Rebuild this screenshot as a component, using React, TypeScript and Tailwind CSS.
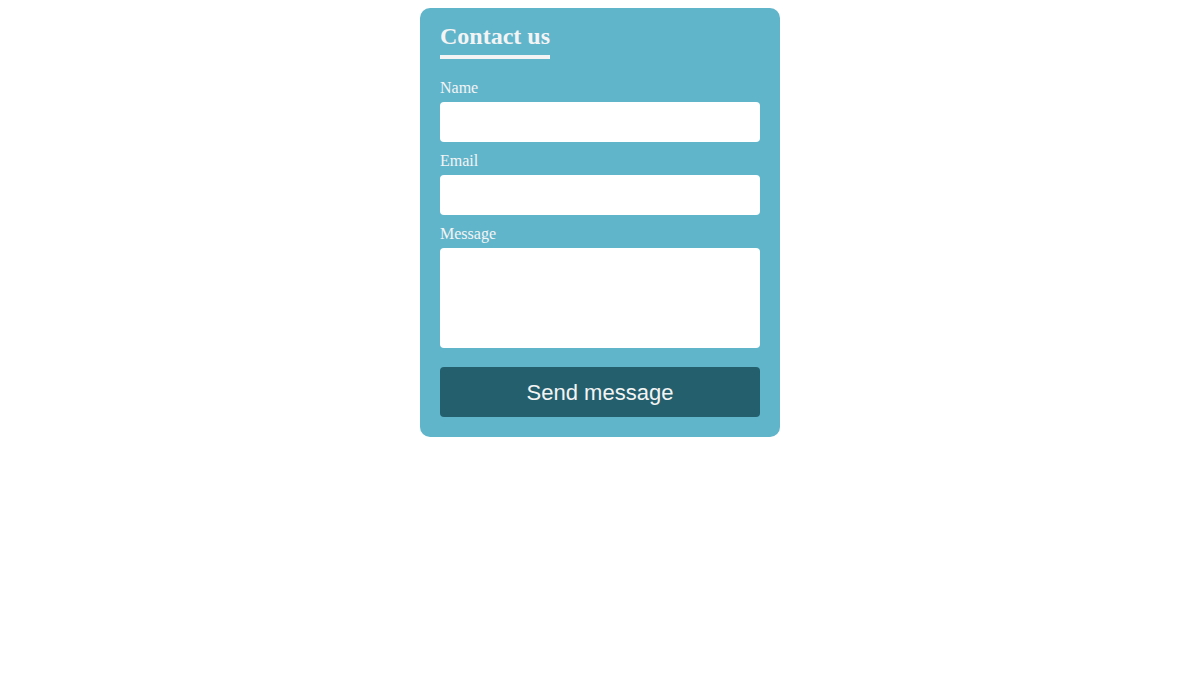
export default function App() {
  return (
    <div className="min-h-[682px] w-full bg-white pt-[8px]" style={{ fontFamily: '"Liberation Serif", "Times New Roman", serif' }}>
      <form
        className="mx-auto flex w-[360px] flex-col rounded-[10px] bg-[#61b5cb] px-[20px] pt-[14px] pb-[20px] text-[#f4f4f4]"
        onSubmit={(e) => e.preventDefault()}
      >
        <div className="mb-[10px] flex">
          <h2 className="border-b-4 border-[#f4f4f4] pb-[5px] text-[24px] font-bold leading-[28px]">Contact us</h2>
        </div>
        <label className="mt-[10px] mb-[5px] text-[16px] leading-[18px]">Name</label>
        <input className="h-[40px] w-full rounded-[4px] bg-white px-2 text-black outline-none" />
        <label className="mt-[10px] mb-[5px] text-[16px] leading-[18px]">Email</label>
        <input className="h-[40px] w-full rounded-[4px] bg-white px-2 text-black outline-none" />
        <label className="mt-[10px] mb-[5px] text-[16px] leading-[18px]">Message</label>
        <textarea className="h-[100px] w-full resize-none rounded-[4px] bg-white p-2 text-black outline-none" />
        <button
          type="submit"
          className="mt-[19px] h-[50px] w-full rounded-[4px] bg-[#235f6d] text-[22px] text-[#f4f4f4]"
          style={{ fontFamily: '"Liberation Sans", Arial, sans-serif' }}
        >
          Send message
        </button>
      </form>
    </div>
  );
}
